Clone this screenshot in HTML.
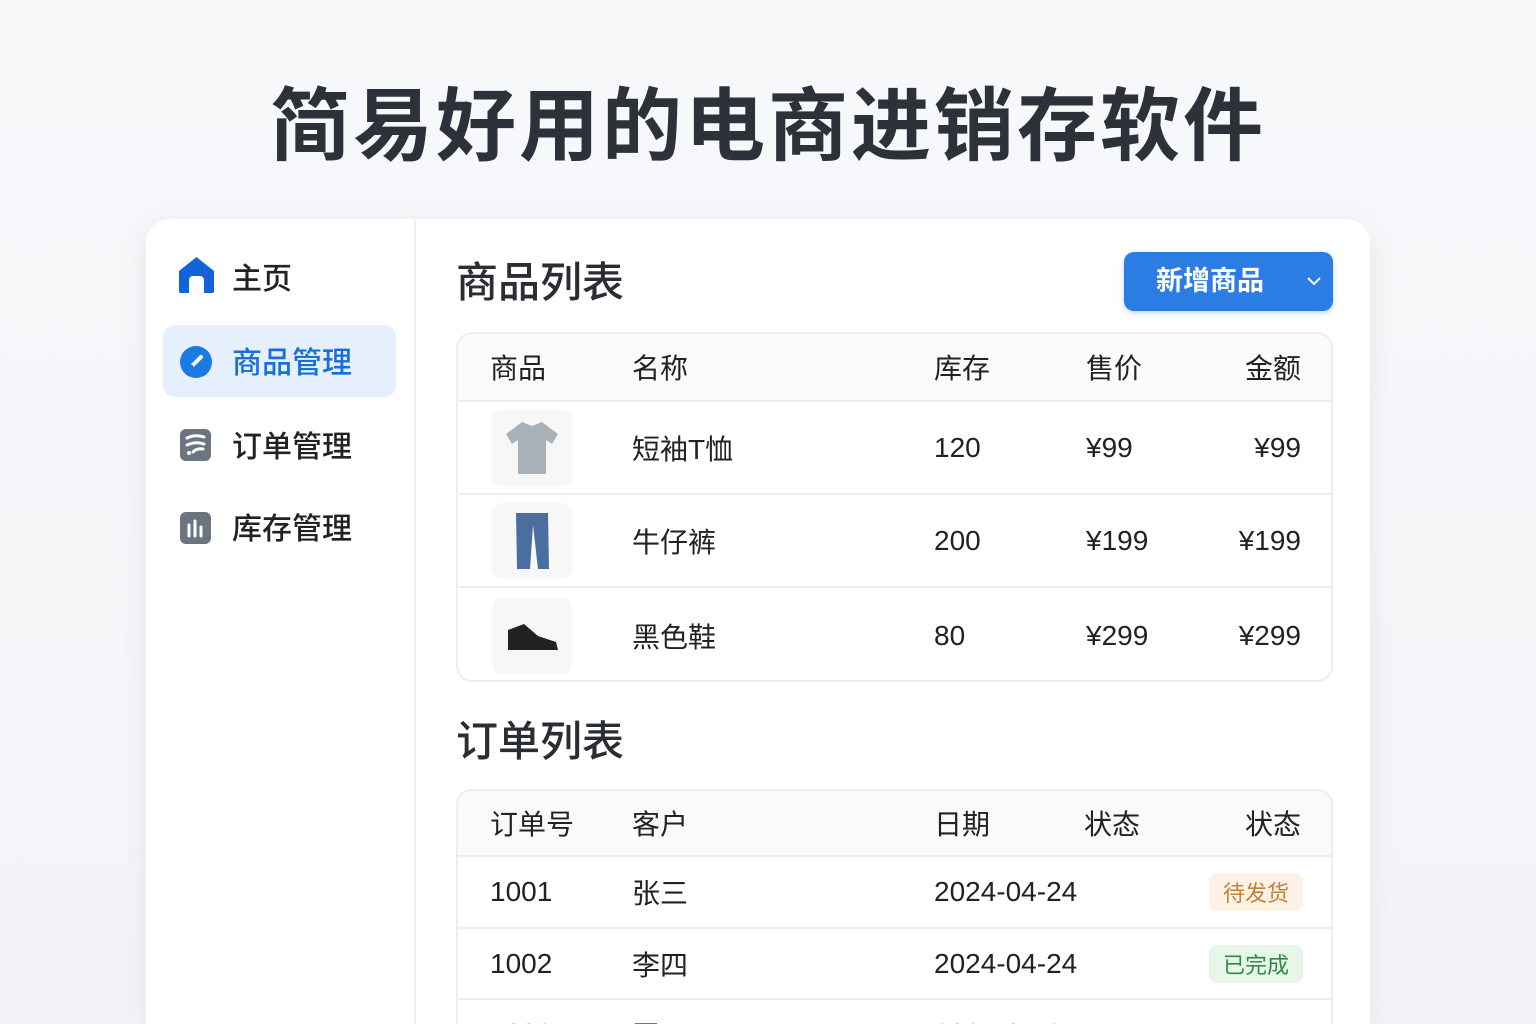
<!DOCTYPE html>
<html style="width:1536px;height:1024px;overflow:hidden"><head><meta charset="utf-8"><style>
*{margin:0;padding:0;box-sizing:border-box}
body{width:1536px;height:1024px;overflow:hidden;background:linear-gradient(#f7f8fa,#f2f4f7);font-family:"Liberation Sans","Noto Sans CJK SC",sans-serif;color:#222;position:relative}
.a{position:absolute;white-space:nowrap}
h1{position:absolute;left:0;width:1536px;top:62px;text-align:center;font-size:80px;font-weight:700;color:#2d3139;letter-spacing:3px;font-family:"Noto Sans CJK SC",sans-serif}
.card{position:absolute;left:146px;top:219px;width:1224px;height:805px;background:#fff;border-radius:24px 24px 0 0;box-shadow:0 6px 30px rgba(0,0,0,.07)}
.div{position:absolute;left:414px;top:219px;width:2px;height:805px;background:#f0f1f3}
.nav{font-size:30px;font-weight:500;color:#222;font-family:"Noto Sans CJK SC",sans-serif}
.tbl{position:absolute;left:456px;width:877px;border:2px solid #eceef1;border-radius:16px;overflow:hidden;background:#fff}
.hd{background:#fafafa;border-bottom:2px solid #eceef1;position:relative}
.row{position:relative;border-bottom:2px solid #eceef1}
.c{position:absolute;top:50%;transform:translateY(-50%);font-size:28px;font-family:"Liberation Sans","Noto Sans CJK SC",sans-serif;color:#222;white-space:nowrap}
.r{right:30px}
.img{position:absolute;left:34px;width:80px;height:76px;background:#f7f7f7;border-radius:10px;top:50%;transform:translateY(-50%);display:flex;align-items:center;justify-content:center}
.bd{position:absolute;right:28px;top:50%;transform:translateY(-50%);width:94px;height:38px;border-radius:8px;font-size:22px;display:flex;align-items:center;justify-content:center;font-family:"Noto Sans CJK SC",sans-serif}
</style></head><body>
<h1>简易好用的电商进销存软件</h1>
<div class="card"></div>
<div class="div"></div>

<svg class="a" style="left:178px;top:256px" width="37" height="38" viewBox="0 0 37 38"><path d="M18.5 1 L36 15 V35 a2 2 0 0 1-2 2 H26 V24 a4 4 0 0 0-4-4 h-7 a4 4 0 0 0-4 4 V37 H3 a2 2 0 0 1-2-2 V15 Z" fill="#1263d8"/></svg>
<div class="a nav" style="left:232px;top:254px">主页</div>

<div class="a" style="left:163px;top:325px;width:233px;height:72px;background:#e5f0fc;border-radius:12px"></div>
<svg class="a" style="left:179px;top:345px" width="34" height="34" viewBox="0 0 34 34"><circle cx="17" cy="17" r="16" fill="#1b7be5"/><path d="M12 22 L22 12" stroke="#fff" stroke-width="4" stroke-linecap="round"/><circle cx="12" cy="22" r="2.5" fill="#1b7be5"/></svg>
<div class="a nav" style="left:232px;top:338px;color:#1a6fd6">商品管理</div>

<svg class="a" style="left:179px;top:428px" width="33" height="34" viewBox="0 0 33 34"><rect x="1" y="1" width="31" height="32" rx="6" fill="#6b7580"/><path d="M8 10 Q16 6 25 9 M8 17 Q17 13 25 16 M14 24 Q18 20 24 21" stroke="#fff" stroke-width="3" fill="none" stroke-linecap="round"/><circle cx="10" cy="25" r="2" fill="#fff"/></svg>
<div class="a nav" style="left:232px;top:422px">订单管理</div>

<svg class="a" style="left:179px;top:511px" width="33" height="34" viewBox="0 0 33 34"><rect x="1" y="1" width="31" height="32" rx="6" fill="#6b7580"/><path d="M10 14v11M16 10v15M22 16v9" stroke="#fff" stroke-width="3" stroke-linecap="round"/></svg>
<div class="a nav" style="left:232px;top:504px">库存管理</div>

<div class="a" style="left:456px;top:249px;font-size:42px;font-weight:500;color:#2a2d33;font-family:'Noto Sans CJK SC',sans-serif">商品列表</div>
<div class="a" style="left:1124px;top:252px;width:209px;height:59px;background:#2b7de3;border-radius:10px;box-shadow:0 2px 6px rgba(43,125,227,.3)"></div>
<div class="a" style="left:1156px;top:259px;font-size:27px;font-weight:700;color:#fff;font-family:'Noto Sans CJK SC',sans-serif">新增商品</div>
<svg class="a" style="left:1306px;top:275px" width="16" height="12" viewBox="0 0 16 12"><path d="M2 3l6 6 6-6" stroke="#fff" stroke-width="2" fill="none"/></svg>

<div class="tbl" style="top:332px;height:350px">
 <div class="hd" style="height:68px"><span class="c" style="left:32px">商品</span><span class="c" style="left:174px">名称</span><span class="c" style="left:476px">库存</span><span class="c" style="left:628px">售价</span><span class="c r">金额</span></div>
 <div class="row" style="height:93px"><div class="img"><svg width="60" height="60" viewBox="0 0 60 60"><path d="M20 4 L30 8 L40 4 L56 16 L50 26 L44 22 L44 56 L16 56 L16 22 L10 26 L4 16 Z" fill="#a9b1b8"/></svg></div><span class="c" style="left:174px">短袖T恤</span><span class="c" style="left:476px">120</span><span class="c" style="left:628px">¥99</span><span class="c r">¥99</span></div>
 <div class="row" style="height:93px"><div class="img"><svg width="40" height="60" viewBox="0 0 40 60"><path d="M4 2h32l1 56h-11l-5-44-3 44H5Z" fill="#4a6f9e"/></svg></div><span class="c" style="left:174px">牛仔裤</span><span class="c" style="left:476px">200</span><span class="c" style="left:628px">¥199</span><span class="c r">¥199</span></div>
 <div class="row" style="height:95px;border:none"><div class="img"><svg width="60" height="40" viewBox="0 0 60 40"><path d="M6 14 L22 8 L36 20 L54 26 L56 34 L6 34 Z" fill="#222"/></svg></div><span class="c" style="left:174px">黑色鞋</span><span class="c" style="left:476px">80</span><span class="c" style="left:628px">¥299</span><span class="c r">¥299</span></div>
</div>

<div class="a" style="left:456px;top:708px;font-size:42px;font-weight:500;color:#2a2d33;font-family:'Noto Sans CJK SC',sans-serif">订单列表</div>

<div class="tbl" style="top:789px;height:260px">
 <div class="hd" style="height:66px"><span class="c" style="left:32px">订单号</span><span class="c" style="left:174px">客户</span><span class="c" style="left:476px">日期</span><span class="c" style="left:626px">状态</span><span class="c r">状态</span></div>
 <div class="row" style="height:72px"><span class="c" style="left:32px">1001</span><span class="c" style="left:174px">张三</span><span class="c" style="left:476px">2024-04-24</span><span class="bd" style="background:#fdf2e4;color:#c0823a">待发货</span></div>
 <div class="row" style="height:71px"><span class="c" style="left:32px">1002</span><span class="c" style="left:174px">李四</span><span class="c" style="left:476px">2024-04-24</span><span class="bd" style="background:#e6f7ea;color:#2e8a46">已完成</span></div>
 <div class="row" style="height:60px;border:none"><span class="c" style="left:32px;top:34px">1003</span><span class="c" style="left:174px;top:34px">王五</span><span class="c" style="left:476px;top:34px">2024-04-24</span></div>
</div>
</body></html>
